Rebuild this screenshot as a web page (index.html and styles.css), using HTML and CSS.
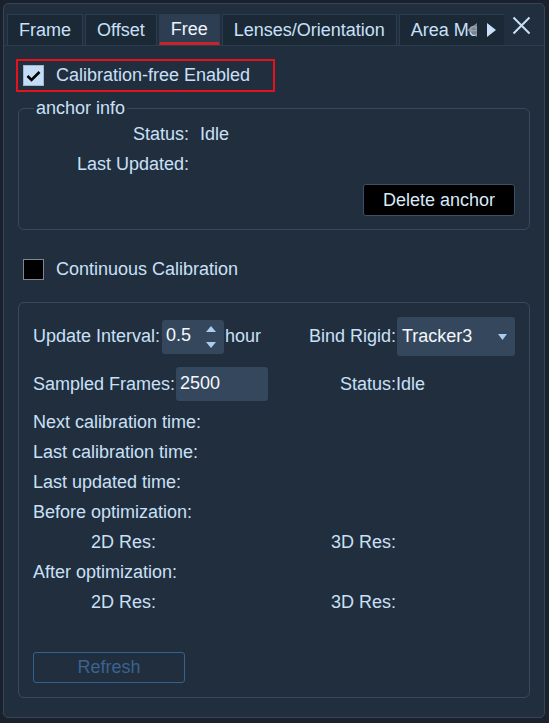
FILE: index.html
```html
<!DOCTYPE html>
<html lang="en">
<head>
  <meta charset="UTF-8">
  <title>Calibration Settings</title>
  <link rel="stylesheet" href="styles.css">
</head>
<body>
  <div class="window">
    <!-- tab strip -->
    <div class="tabbar">
      <div class="tabs">
        <div class="tab">Frame</div>
        <div class="tab">Offset</div>
        <div class="tab active">Free</div>
        <div class="tab">Lenses/Orientation</div>
        <div class="tab tab-cut">Area Me</div>
        <div class="scroll-arrows">
          <svg class="arrow-left" width="10" height="14" viewBox="0 0 10 14"><polygon points="10,0 10,14 0,7" fill="#8d959e" fill-opacity="0.85"/></svg>
          <div class="arrow-right">
            <svg width="9" height="14" viewBox="0 0 9 14"><polygon points="0,0 0,14 9,7" fill="#c9e0f8"/></svg>
          </div>
        </div>
      </div>
      <div class="close">
        <svg width="19" height="19" viewBox="0 0 19 19"><path d="M1.5 1.5 L17.5 17.5 M17.5 1.5 L1.5 17.5" stroke="#c9e0f8" stroke-width="2"/></svg>
      </div>
    </div>

    <label class="enable-box">
      <span class="check checked">
        <svg width="15" height="12" viewBox="0 0 15 12"><path d="M1.5 6 L5.5 10 L13.5 2" stroke="#000" stroke-width="2.6" fill="none"/></svg>
      </span>
      Calibration-free Enabled
    </label>

    <fieldset class="group anchor">
      <legend>anchor info</legend>
      <div class="info-grid">
        <span class="lbl">Status:</span><span>Idle</span>
        <span class="lbl">Last Updated:</span><span></span>
      </div>
      <div class="anchor-actions">
        <button class="btn-dark">Delete anchor</button>
      </div>
    </fieldset>

    <label class="continuous">
      <span class="check"></span>
      Continuous Calibration
    </label>

    <div class="group calib">
      <div class="row row-interval">
        <span>Update Interval:</span>
        <div class="spin">
          <span class="val">0.5</span>
          <div class="spin-arrows">
            <svg width="10" height="6" viewBox="0 0 10 6"><polygon points="5,0 10,6 0,6" fill="#a8cdf1"/></svg>
            <svg width="10" height="6" viewBox="0 0 10 6"><polygon points="0,0 10,0 5,6" fill="#a8cdf1"/></svg>
          </div>
        </div>
        <span class="unit">hour</span>
        <span class="bind-label">Bind Rigid:</span>
        <div class="combo">
          <span class="val">Tracker3</span>
          <svg width="9" height="6" viewBox="0 0 9 6"><polygon points="0,0 9,0 4.5,6" fill="#a8cdf1"/></svg>
        </div>
      </div>
      <div class="row row-frames">
        <span>Sampled Frames:</span>
        <div class="field"><span class="val">2500</span></div>
        <span class="status">Status:Idle</span>
      </div>
      <div class="lines">
        <div class="line">Next calibration time:</div>
        <div class="line">Last calibration time:</div>
        <div class="line">Last updated time:</div>
        <div class="line">Before optimization:</div>
        <div class="line res"><span>2D Res:</span><span>3D Res:</span></div>
        <div class="line">After optimization:</div>
        <div class="line res"><span>2D Res:</span><span>3D Res:</span></div>
      </div>
      <button class="btn-disabled">Refresh</button>
    </div>
  </div>
</body>
</html>
```

FILE: styles.css
```css
body {
  margin: 0;
  background-color: #18212c;
  font-family: "Liberation Sans", Arial, sans-serif;
  font-size: 18px;
  color: #c9e0f8;
}
.window {
  box-sizing: border-box;
  width: 542px;
  height: 715px;
  margin: 3px;
  padding: 10px 14px 0 14px;
  background-color: #212e3d;
  border: 1px solid #354557;
  border-radius: 5px;
}

/* tabs */
.tabbar {
  display: flex;
  margin: 0 -14px;
  padding-left: 3px;
  height: 32px;
  box-sizing: border-box;
  border-bottom: 1px solid #2d3d50;
}
.tabs {
  position: relative;
  display: flex;
  gap: 2px;
  width: 497px;
  overflow: hidden;
}
.tab {
  flex: none;
  box-sizing: border-box;
  height: 31px;
  padding: 0 11px;
  line-height: 31px;
  background-color: #1b2836;
  border: 1px solid #2d3d50;
  border-bottom: none;
  white-space: nowrap;
}
.tab.active {
  background-color: #2d3e52;
  color: #eef5fd;
  line-height: 28px;
  border-bottom: 3px solid #c8222a;
}
.tab-cut {
  flex: 1;
}
.scroll-arrows {
  position: absolute;
  top: 1px;
  left: 460px;
  right: 0;
  height: 30px;
  display: flex;
  align-items: center;
}
.arrow-left {
  flex: none;
}
.arrow-right {
  flex: 1;
  height: 100%;
  display: flex;
  align-items: center;
  padding-left: 10px;
  background-color: #1b2836;
}
.close {
  margin-left: 8px;
  padding-top: 2px;
}

/* checkboxes */
.enable-box {
  display: flex;
  align-items: center;
  gap: 12px;
  box-sizing: border-box;
  width: 259px;
  height: 33px;
  margin: 13px 0 0 -2px;
  padding-left: 5px;
  border: 2px solid #e3121b;
}
.check {
  box-sizing: border-box;
  width: 21px;
  height: 21px;
  background-color: #000;
  border: 1px solid #7d8896;
  display: flex;
  align-items: center;
  justify-content: center;
}
.check.checked {
  background-color: #c4dcf5;
  border-color: #9fb8d2;
}
.continuous {
  display: flex;
  align-items: center;
  gap: 12px;
  height: 20px;
  margin: 29px 0 0 5px;
}

/* group boxes */
.group {
  margin: 0;
  border: 1px solid #37495e;
  border-radius: 6px;
}
.anchor {
  margin-top: 8px;
  padding: 8px 14px 13px 0;
}
.anchor legend {
  margin-left: 15px;
  padding: 0 2px;
  line-height: 16px;
}
.info-grid {
  display: grid;
  grid-template-columns: 170px 1fr;
  column-gap: 11px;
  row-gap: 10px;
  line-height: 20px;
}
.info-grid .lbl {
  text-align: right;
}
.anchor-actions {
  display: flex;
  justify-content: flex-end;
  margin-top: 10px;
}
.btn-dark {
  width: 152px;
  height: 32px;
  font: inherit;
  color: #dbe9f8;
  background-color: #000;
  border: 1px solid #3b4f66;
  border-radius: 3px;
}

.calib {
  margin-top: 23px;
  padding: 14px 14px 14px 14px;
}
.row {
  display: flex;
  align-items: center;
}
.row-interval {
  height: 39px;
}
.val {
  color: #f4f8fc;
}
.spin {
  box-sizing: border-box;
  display: flex;
  align-items: center;
  justify-content: space-between;
  width: 62px;
  height: 34px;
  margin-left: 2px;
  padding: 0 8px 2px 4px;
  background-color: #35475c;
  border-radius: 3px;
}
.spin-arrows {
  display: flex;
  flex-direction: column;
  gap: 10px;
  padding-top: 3px;
}
.spin-arrows svg {
  display: block;
}
.unit {
  margin-left: 1px;
}
.bind-label {
  margin-left: auto;
}
.combo {
  box-sizing: border-box;
  display: flex;
  align-items: center;
  justify-content: space-between;
  width: 118px;
  height: 39px;
  margin-left: 1px;
  padding: 0 8px 0 5px;
  background-color: #35475c;
  border-radius: 3px;
}
.row-frames {
  height: 34px;
  margin-top: 11px;
}
.field {
  box-sizing: border-box;
  width: 92px;
  height: 34px;
  margin-left: 1px;
  padding: 6px 4px 0;
  background-color: #35475c;
  border-radius: 3px;
}
.status {
  margin-left: 72px;
}
.lines {
  margin-top: 6px;
}
.line {
  line-height: 30px;
}
.line.res {
  display: grid;
  grid-template-columns: 240px 1fr;
  padding-left: 58px;
}
.btn-disabled {
  display: block;
  width: 152px;
  height: 31px;
  margin-top: 35px;
  font: inherit;
  color: #3a6391;
  background: transparent;
  border: 1px solid #35618f;
  border-radius: 3px;
}
```
